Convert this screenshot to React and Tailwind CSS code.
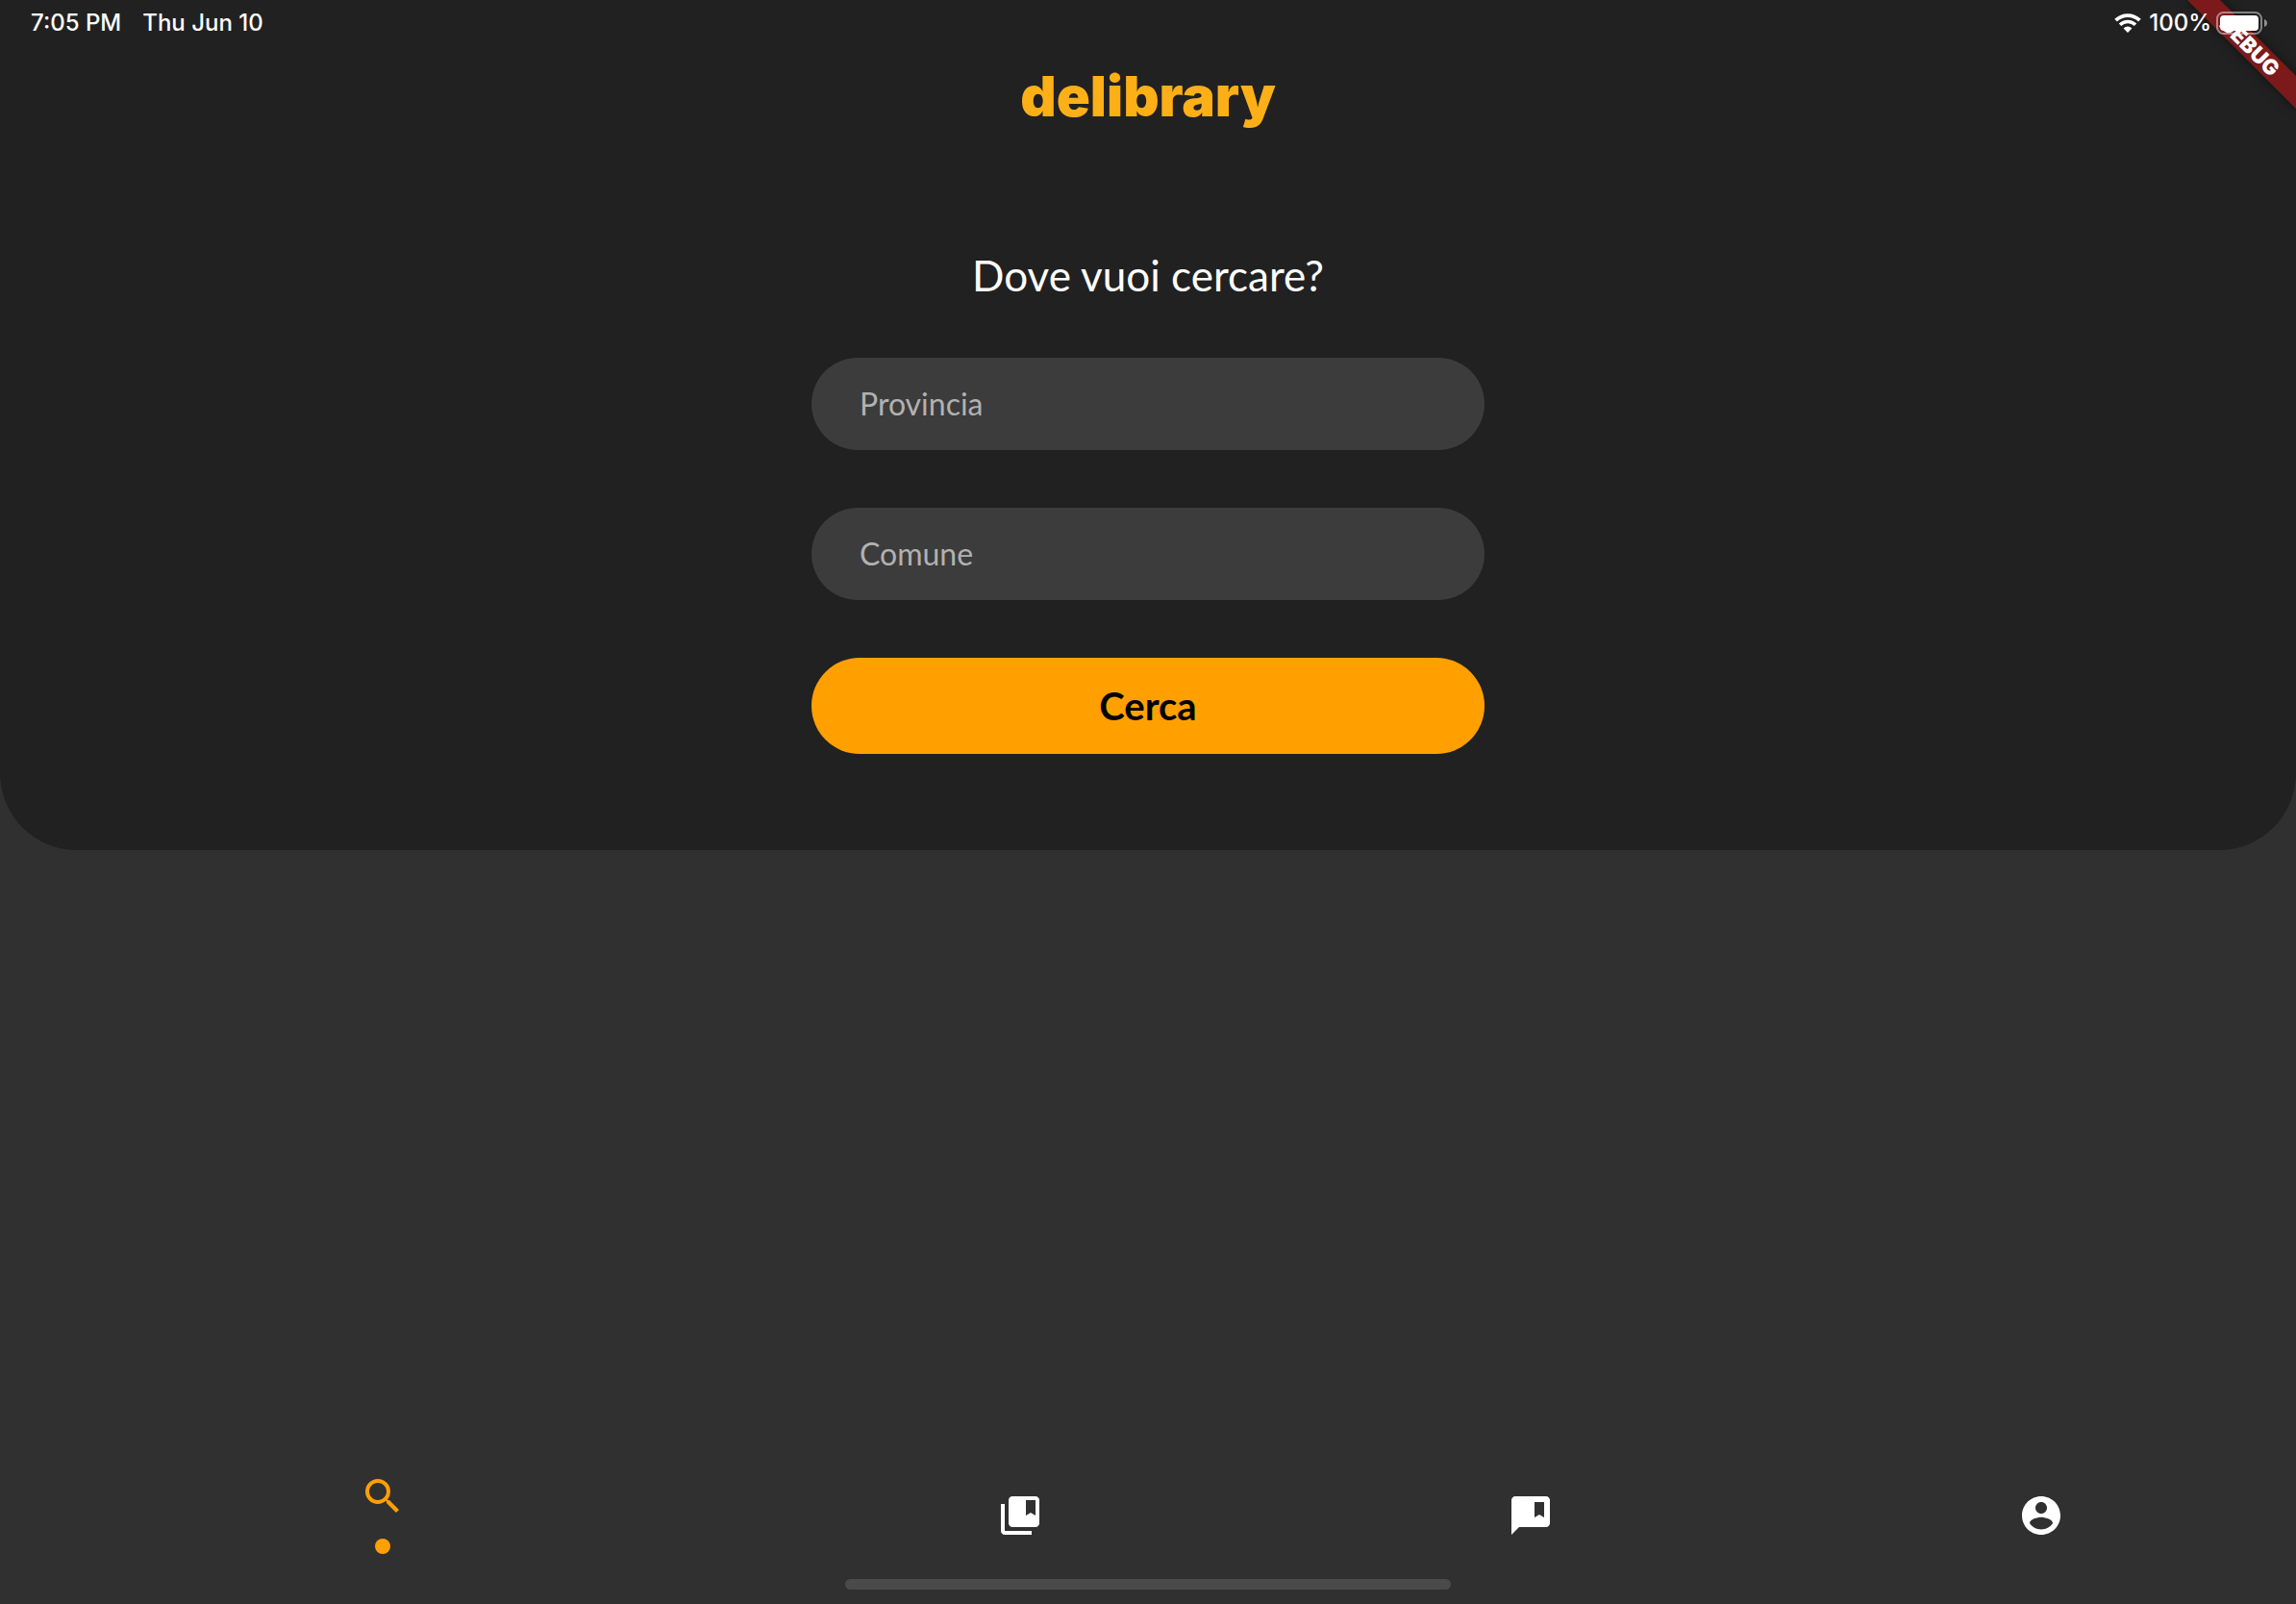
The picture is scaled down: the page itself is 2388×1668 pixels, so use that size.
const tabs = [
  {
    label: "Libreria",
    path: "M4 6H2v14c0 1.1.9 2 2 2h14v-2H4V6zm16-4H8c-1.1 0-2 .9-2 2v12c0 1.1.9 2 2 2h12c1.1 0 2-.9 2-2V4c0-1.1-.9-2-2-2zm0 10l-2.5-1.5L15 12V4h5v8z",
  },
  {
    label: "Scambi",
    path: "M20 2H4c-1.1 0-1.99.9-1.99 2L2 22l4-4h14c1.1 0 2-.9 2-2V4c0-1.1-.9-2-2-2zm-1 11l-2.5-1.5L14 13V5h5v8z",
  },
  {
    label: "Profilo",
    path: "M12 2C6.48 2 2 6.48 2 12s4.48 10 10 10 10-4.48 10-10S17.52 2 12 2zm0 3c1.66 0 3 1.34 3 3s-1.34 3-3 3-3-1.34-3-3 1.34-3 3-3zm0 14.2c-2.5 0-4.71-1.28-6-3.22.03-1.99 4-3.08 6-3.08 1.99 0 5.97 1.09 6 3.08-1.29 1.94-3.5 3.22-6 3.22z",
  },
];

function Icon({ path }) {
  return (
    <svg viewBox="0 0 24 24" className="size-12" fill="currentColor" aria-hidden="true">
      <path d={path} />
    </svg>
  );
}

function WifiIcon() {
  return (
    <svg viewBox="0 0 28 20" className="h-5 w-7" fill="none" aria-hidden="true">
      <path d="M1.6 7.2a17.6 17.6 0 0 1 24.8 0" stroke="white" strokeWidth="3.8" />
      <path d="M6 11.8a11.4 11.4 0 0 1 16 0" stroke="white" strokeWidth="3.6" />
      <path d="M14 20l-4.4-4.6a6.3 6.3 0 0 1 8.8 0z" fill="white" />
    </svg>
  );
}

function BatteryIcon() {
  return (
    <svg viewBox="0 0 54 24" className="h-6 w-[54px]" fill="none" aria-hidden="true">
      <rect x="1" y="1" width="46" height="22" rx="6.5" stroke="white" strokeOpacity="0.45" strokeWidth="2" />
      <rect x="4" y="4" width="40" height="16" rx="4" fill="white" />
      <path d="M50 8c2 .7 3 2.200 3 4s-1 3.300-3 4z" fill="white" fillOpacity="0.5" />
    </svg>
  );
}

function StatusBar() {
  return (
    <div className="relative flex h-12 items-center justify-between pr-[29px] pl-8 font-['Inter',sans-serif] text-2xl font-medium">
      <div className="flex gap-[22px]">
        <span>7:05 PM</span>
        <span>Thu Jun 10</span>
      </div>
      <div className="flex items-center gap-2">
        <WifiIcon />
        <div className="flex items-center gap-[5px]">
          <span>100%</span>
          <BatteryIcon />
        </div>
      </div>
    </div>
  );
}

function DebugRibbon() {
  return (
    <div className="absolute top-0 right-0 size-32 overflow-hidden" aria-hidden="true">
      <div className="absolute top-9 -right-8 flex h-6 w-40 rotate-45 items-center justify-center bg-[#7c1a1b] font-['Inter',sans-serif] text-[22px] font-black shadow-[0_0_12px_rgba(0,0,0,0.5)]">
        DEBUG
      </div>
    </div>
  );
}

function Field({ label }) {
  return (
    <input
      type="text"
      aria-label={label}
      placeholder={label}
      className="h-24 w-full rounded-full bg-[#3c3c3c] px-[50px] pb-0.5 text-[32px] text-white outline-none placeholder:text-[#b1b1b1]"
    />
  );
}

export default function App() {
  return (
    <div className="relative flex min-h-screen flex-col overflow-hidden bg-[#303030] font-['Lato',sans-serif] text-white">
      <header className="relative rounded-b-[80px] bg-[#212121] pb-[100px]">
        <DebugRibbon />
        <StatusBar />
        <h1 className="mt-4 text-center font-['Inter',sans-serif] text-[58px] leading-[72px] font-black text-[#fdaf17]">
          delibrary
        </h1>
        <form
          className="mx-auto flex w-full max-w-[700px] flex-col gap-[60px] pt-[120px]"
          onSubmit={(event) => event.preventDefault()}
        >
          <h2 className="-mb-1 text-center text-[44px] leading-[60px]">Dove vuoi cercare?</h2>
          <Field label="Provincia" />
          <Field label="Comune" />
          <button type="submit" className="h-[100px] rounded-full bg-[#ffa000] text-[40px] font-bold text-black">
            Cerca
          </button>
        </form>
      </header>

      <main className="grow" />

      <nav className="grid grid-cols-[3fr_2fr_2fr_2fr] items-center pb-[22px]">
        <button type="button" aria-label="Cerca" className="flex flex-col items-center gap-5 pb-1 text-[#ffa000]">
          <Icon path="M15.500 14h-.79l-.28-.27A6.471 6.471 0 0 0 16 9.500 6.500 6.500 0 1 0 9.500 16c1.610 0 3.090-.59 4.230-1.570l.27.28v.79l5 4.990L20.490 19l-4.990-5zm-6 0C7.010 14 5 11.990 5 9.500S7.010 5 9.500 5 14 7.010 14 9.500 11.990 14 9.500 14z" />
          <span className="size-4 rounded-full bg-[#ffa000]" />
        </button>
        {tabs.map((tab) => (
          <button key={tab.label} type="button" aria-label={tab.label} className="flex justify-center">
            <Icon path={tab.path} />
          </button>
        ))}
      </nav>
      <div className="mx-auto mb-[15px] h-[11px] w-[630px] rounded-full bg-[#4a4a4a]" />
    </div>
  );
}
